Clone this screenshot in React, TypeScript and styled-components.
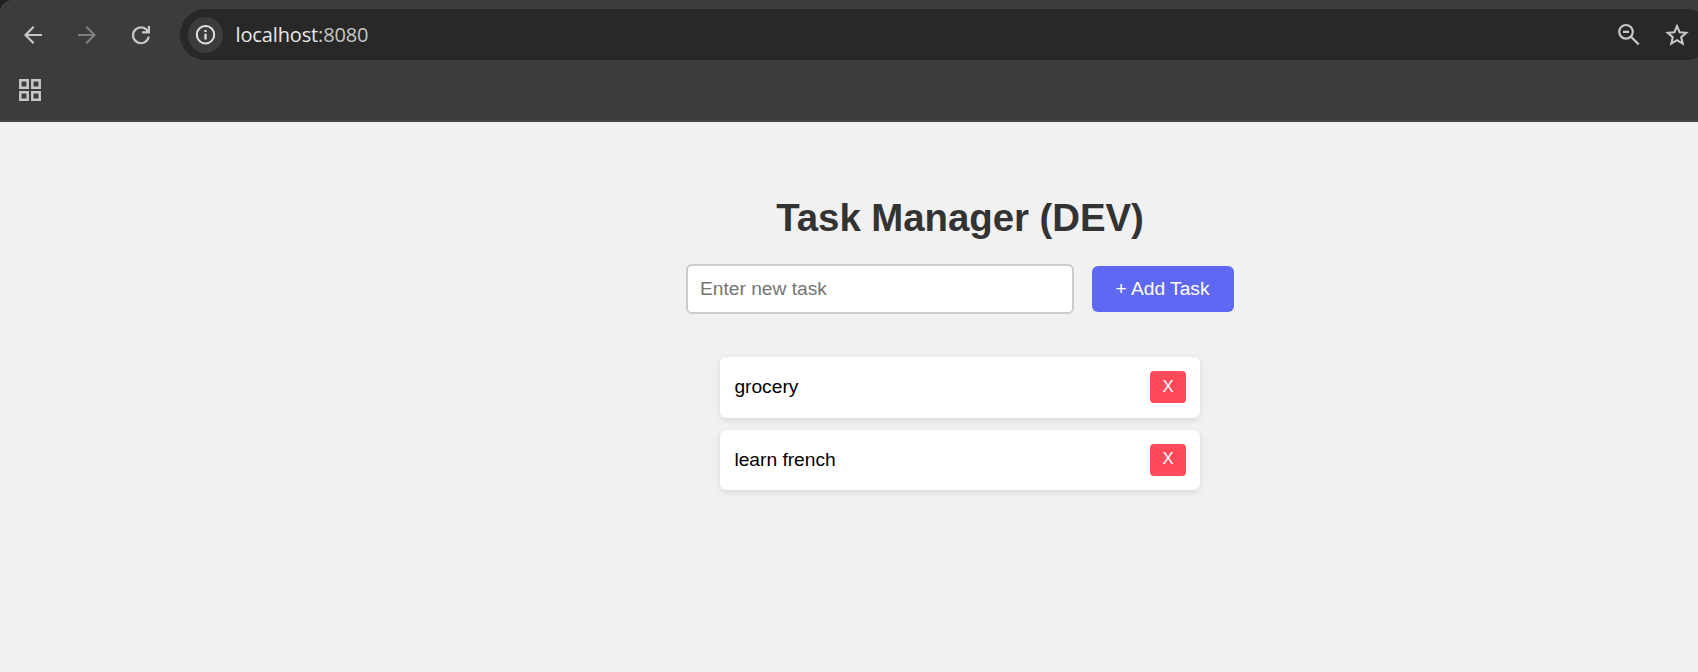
import React from 'react';
import styled, { createGlobalStyle } from 'styled-components';

const Global = createGlobalStyle`
  * { box-sizing: border-box; }
  html, body { margin: 0; padding: 0; background: #f1f1f1; overflow: hidden; }
`;

const Window = styled.div`
  height: 672px;
  width: 100%;
  overflow: hidden;
  display: flex;
  flex-direction: column;
  background: #f1f1f1;
  font-family: 'Liberation Sans', Arial, sans-serif;
`;

const Backdrop = styled.header`
  background: #1f2020;
  flex: none;
`;

const Chrome = styled.div`
  height: 122px;
  background: #3c3c3c;
  border-top-left-radius: 12px;
  box-shadow: inset 0 -2px 0 #444;
`;

const Toolbar = styled.div`
  display: flex;
  align-items: center;
  height: 60px;
  padding: 9px 0 0 18px;
`;

const IconSlot = styled.div<{ $color?: string; $gap: number }>`
  width: 30px;
  height: 30px;
  flex: none;
  margin-right: ${(p) => p.$gap}px;
  color: ${(p) => p.$color ?? '#c7c7c7'};
  svg { display: block; }
`;

const AddressBar = styled.div`
  flex: none;
  width: 1532px;
  height: 51px;
  display: flex;
  align-items: center;
  padding: 0 20px 0 8px;
  border-radius: 26px;
  background: #282828;
`;

const SiteInfo = styled.div`
  width: 35px;
  height: 36px;
  border-radius: 18px;
  background: #3c3c3c;
  color: #e3e3e3;
  flex: none;
  svg { display: block; }
`;

const Url = styled.div`
  flex: 1;
  padding-left: 12.6px;
  font-family: 'Open Sans', 'Noto Sans', sans-serif;
  font-size: 20px;
  line-height: 28px;
  letter-spacing: -0.15px;
  color: #e8e8e8;
`;

const Port = styled.span`
  color: #c7c7c7;
`;

const Bookmarks = styled.div`
  padding: 15px 0 0 15px;
`;

const Page = styled.main`
  flex: 1;
  width: 1920px;
  display: flex;
  flex-direction: column;
  align-items: center;
`;

const Title = styled.h1`
  margin: 74px 0 24px;
  font-size: 38.4px;
  line-height: 44px;
  font-weight: 700;
  letter-spacing: -0.05px;
  color: #333;
`;

const Form = styled.form`
  display: flex;
  align-items: center;
  gap: 18px;
  margin-bottom: 43px;
`;

const TaskInput = styled.input`
  width: 388px;
  height: 50px;
  padding: 0 12px 1px;
  border: 2px solid #ccc;
  border-radius: 6px;
  background: #fff;
  font: 19.2px 'Liberation Sans', Arial, sans-serif;
  outline: none;
  &::placeholder { color: #757575; opacity: 1; }
`;

const AddButton = styled.button`
  width: 142px;
  height: 46px;
  padding: 0 1px 1px 0;
  border: 0;
  border-radius: 6px;
  background: #5f68f2;
  color: #fff;
  font: 19.2px 'Liberation Sans', Arial, sans-serif;
  white-space: nowrap;
`;

const List = styled.ul`
  width: 480px;
  margin: 0;
  padding: 0;
  list-style: none;
  display: flex;
  flex-direction: column;
  gap: 12px;
`;

const Task = styled.li`
  height: 60.5px;
  padding: 0 14px 0 14.4px;
  display: flex;
  align-items: center;
  justify-content: space-between;
  background: #fff;
  border-radius: 6px;
  box-shadow: 0 2px 6px rgba(0, 0, 0, 0.1);
  font-size: 19.2px;
  line-height: 22px;
  color: #000;
`;

const DeleteButton = styled.button`
  width: 36px;
  height: 32px;
  padding: 0 0 1px;
  border: 0;
  border-radius: 4px;
  background: #ff4b5c;
  color: #fff;
  font: 16.8px 'Liberation Sans', Arial, sans-serif;
`;

const stroke = { fill: 'none', stroke: 'currentColor', strokeWidth: 2.2 };

const BackIcon = () => (
  <svg width="30" height="30" viewBox="0 0 30 30" {...stroke}>
    <path d="M24 15H7.5M15.7 6.8L7.5 15l8.2 8.2" />
  </svg>
);

const ForwardIcon = () => (
  <svg width="30" height="30" viewBox="0 0 30 30" {...stroke}>
    <path d="M6 15h16.5M14.3 6.8l8.2 8.2-8.2 8.2" />
  </svg>
);

const ReloadIcon = () => (
  <svg width="30" height="30" viewBox="0 0 30 30" {...stroke}>
    <path d="M22.7 16.6A7.9 7.9 0 1 1 22 11.8M22.9 6v6.3h-6.9" />
  </svg>
);

const InfoIcon = () => (
  <svg width="35" height="36" viewBox="0 0 35 36" {...stroke}>
    <circle cx="17.5" cy="17.7" r="8.7" strokeWidth="2" />
    <path d="M17.5 16.7v5.8M17.5 13v2.1" strokeWidth="2.2" />
  </svg>
);

const ZoomOutIcon = () => (
  <svg width="30" height="30" viewBox="0 0 30 30" {...stroke}>
    <circle cx="12" cy="11.8" r="6.8" />
    <path d="M17 16.8l7.7 7.6M9 11.8h6" />
  </svg>
);

const StarIcon = () => (
  <svg width="30" height="30" viewBox="0 0 30 30" {...stroke} strokeWidth="2.1">
    <path d="M15 6.1l2.6 6.1 6.6.6-5 4.35 1.5 6.5L15 20.2l-5.7 3.45 1.5-6.5-5-4.35 6.6-.6z" />
  </svg>
);

const AppsIcon = () => (
  <svg width="30" height="30" viewBox="0 0 30 30" {...stroke} strokeWidth="2.5">
    <path d="M5.3 5.3h7.4v7.4H5.3zM17.3 5.3h7.4v7.4h-7.4zM5.3 17.3h7.4v7.4H5.3zM17.3 17.3h7.4v7.4h-7.4z" />
  </svg>
);

const tasks = ['grocery', 'learn french'];

export default function App() {
  return (
    <Window>
      <Global />
      <Backdrop>
        <Chrome>
          <Toolbar>
            <IconSlot $gap={24}><BackIcon /></IconSlot>
            <IconSlot $gap={24} $color="#7e7e7e"><ForwardIcon /></IconSlot>
            <IconSlot $gap={24}><ReloadIcon /></IconSlot>
            <AddressBar>
              <SiteInfo><InfoIcon /></SiteInfo>
              <Url>localhost<Port>:8080</Port></Url>
              <IconSlot $gap={18}><ZoomOutIcon /></IconSlot>
              <IconSlot $gap={0}><StarIcon /></IconSlot>
            </AddressBar>
          </Toolbar>
          <Bookmarks>
            <IconSlot $gap={0}><AppsIcon /></IconSlot>
          </Bookmarks>
        </Chrome>
      </Backdrop>
      <Page>
        <Title>Task Manager (DEV)</Title>
        <Form onSubmit={(e) => e.preventDefault()}>
          <TaskInput placeholder="Enter new task" />
          <AddButton type="submit">+ Add Task</AddButton>
        </Form>
        <List>
          {tasks.map((task) => (
            <Task key={task}>
              <span>{task}</span>
              <DeleteButton>X</DeleteButton>
            </Task>
          ))}
        </List>
      </Page>
    </Window>
  );
}
